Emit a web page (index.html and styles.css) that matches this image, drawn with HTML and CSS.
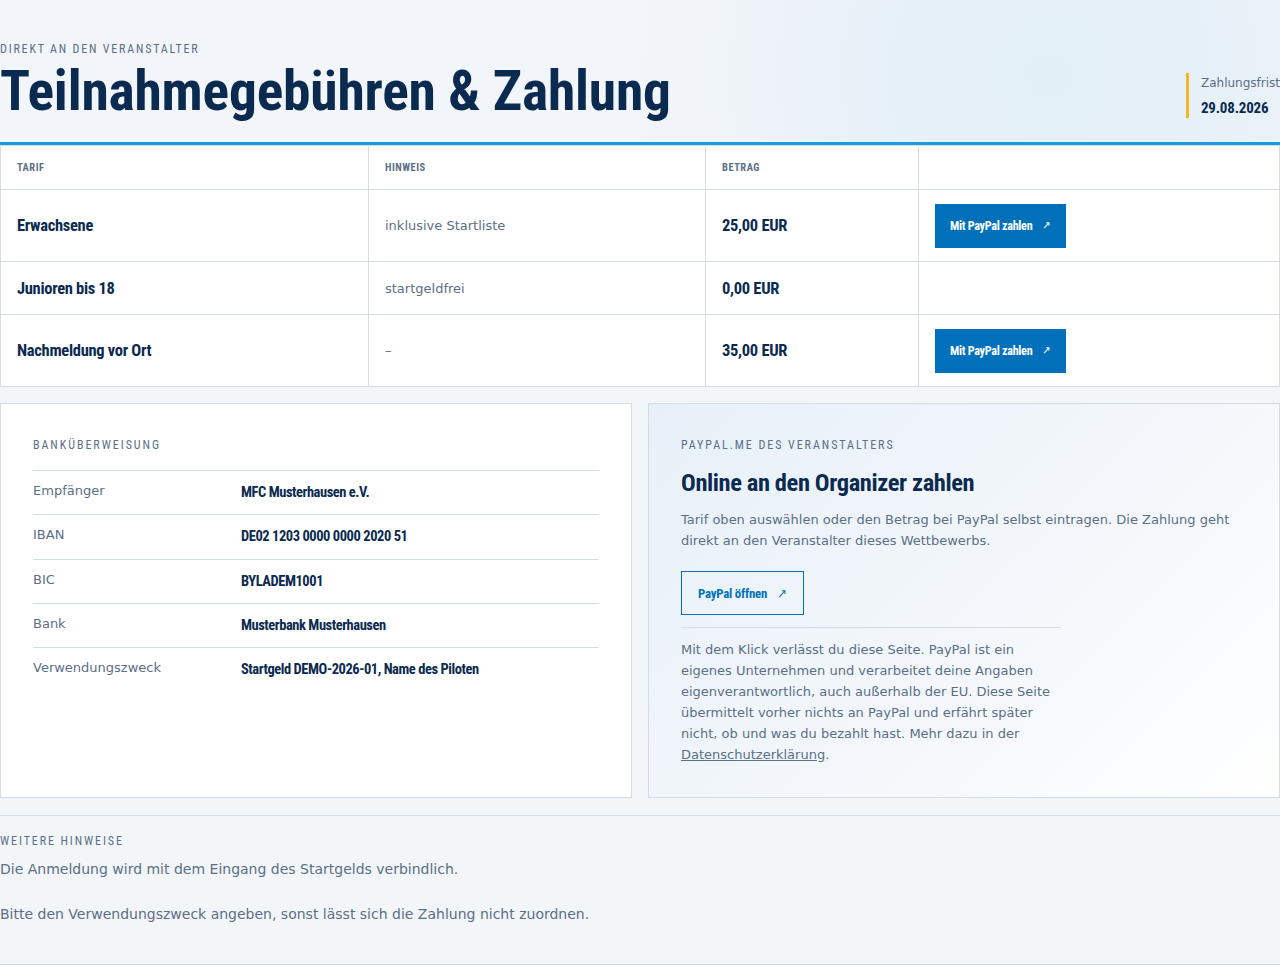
FILE: index.html
```html
<!DOCTYPE html>
<html lang="de">
<head>
<meta charset="utf-8">
<title>Teilnahmegebühren &amp; Zahlung</title>
<link rel="stylesheet" href="styles.css">
</head>
<body>
<main class="page">
  <header class="hero">
    <div class="hero-text">
      <p class="eyebrow">Direkt an den Veranstalter</p>
      <h1 class="title">Teilnahmegebühren &amp; Zahlung</h1>
    </div>
    <div class="deadline">
      <span class="deadline-label">Zahlungsfrist</span>
      <strong class="deadline-date">29.08.2026</strong>
    </div>
  </header>

  <table class="fees">
    <thead>
      <tr>
        <th class="col-tarif">Tarif</th>
        <th class="col-hint">Hinweis</th>
        <th class="col-amount">Betrag</th>
        <th class="col-action"></th>
      </tr>
    </thead>
    <tbody>
      <tr class="row-tall">
        <td class="tarif">Erwachsene</td>
        <td class="hint">inklusive Startliste</td>
        <td class="amount">25,00 EUR</td>
        <td><a class="btn-pay" href="#">Mit PayPal zahlen <span class="arrow">↗</span></a></td>
      </tr>
      <tr>
        <td class="tarif">Junioren bis 18</td>
        <td class="hint">startgeldfrei</td>
        <td class="amount">0,00 EUR</td>
        <td></td>
      </tr>
      <tr class="row-tall">
        <td class="tarif">Nachmeldung vor Ort</td>
        <td class="hint">–</td>
        <td class="amount">35,00 EUR</td>
        <td><a class="btn-pay" href="#">Mit PayPal zahlen <span class="arrow">↗</span></a></td>
      </tr>
    </tbody>
  </table>

  <section class="cards">
    <div class="card card-bank">
      <p class="eyebrow eyebrow-card">Banküberweisung</p>
      <dl class="bank-list">
        <div class="bank-row"><dt>Empfänger</dt><dd>MFC Musterhausen e.V.</dd></div>
        <div class="bank-row"><dt>IBAN</dt><dd>DE02 1203 0000 0000 2020 51</dd></div>
        <div class="bank-row"><dt>BIC</dt><dd>BYLADEM1001</dd></div>
        <div class="bank-row"><dt>Bank</dt><dd>Musterbank Musterhausen</dd></div>
        <div class="bank-row"><dt>Verwendungszweck</dt><dd>Startgeld DEMO-2026-01, Name des Piloten</dd></div>
      </dl>
    </div>
    <div class="card card-paypal">
      <p class="eyebrow eyebrow-card">PayPal.me des Veranstalters</p>
      <h2 class="card-title">Online an den Organizer zahlen</h2>
      <p class="card-text">Tarif oben auswählen oder den Betrag bei PayPal selbst eintragen. Die Zahlung geht direkt an den Veranstalter dieses Wettbewerbs.</p>
      <a class="btn-outline" href="#">PayPal öffnen <span class="arrow arrow-lg">↗</span></a>
      <p class="notice">Mit dem Klick verlässt du diese Seite. PayPal ist ein eigenes Unternehmen und verarbeitet deine Angaben eigenverantwortlich, auch außerhalb der EU. Diese Seite übermittelt vorher nichts an PayPal und erfährt später nicht, ob und was du bezahlt hast. Mehr dazu in der <a href="#" class="link">Datenschutzerklärung</a>.</p>
    </div>
  </section>

  <section class="more">
    <p class="eyebrow eyebrow-more">Weitere Hinweise</p>
    <p class="more-text">Die Anmeldung wird mit dem Eingang des Startgelds verbindlich.</p>
    <p class="more-text">Bitte den Verwendungszweck angeben, sonst lässt sich die Zahlung nicht zuordnen.</p>
  </section>
</main>
</body>
</html>
```
FILE: styles.css
```css
* { box-sizing: border-box; }

html, body {
  margin: 0;
  padding: 0;
}

body {
  background: #f3f6f9;
  font-family: "DejaVu Sans", sans-serif;
  color: #5b6f86;
  overflow-x: hidden;
}

.page {
  width: 1280px;
}

.hero {
  display: flex;
  justify-content: space-between;
  align-items: flex-end;
  height: 145px;
  padding: 42px 0 22px 0;
  border-bottom: 3px solid #1a9bdb;
  background:
    radial-gradient(circle at 1050px 75px, #e3eff7 0, #e6f0f8 140px, rgba(232,241,248,0.6) 260px, rgba(243,246,249,0) 420px),
    #f2f5f9;
}

.eyebrow {
  margin: 0;
  font-family: "Roboto Condensed", "Roboto", sans-serif;
  font-stretch: condensed;
  font-size: 12px;
  letter-spacing: 1.8px;
  text-transform: uppercase;
  color: #5b6f86;
  line-height: 16px;
}

.title {
  margin: 4px 0 -3px 0;
  font-family: "Roboto Condensed", "Roboto", sans-serif;
  font-stretch: condensed;
  font-weight: 700;
  font-size: 55.5px;
  line-height: 62px;
  color: #0b2a4f;
  letter-spacing: -0.2px;
}

.deadline {
  display: flex;
  flex-direction: column;
  gap: 8px;
  border-left: 3px solid #f2b824;
  padding: 2px 0 1px 12px;
  margin-bottom: 2px;
}

.deadline-label {
  font-size: 12px;
  line-height: 16px;
}

.deadline-date {
  font-family: "Roboto Condensed", "Roboto", sans-serif;
  font-stretch: condensed;
  font-weight: 700;
  font-size: 15px;
  line-height: 18px;
  letter-spacing: -0.2px;
  color: #0b2a4f;
}

/* table */
.fees {
  width: 1280px;
  border-collapse: collapse;
  background: #ffffff;
}

.fees th, .fees td {
  border: 1px solid #d3dde7;
  padding: 0 16px;
  text-align: left;
  vertical-align: middle;
}

.fees th {
  height: 44px;
  font-family: "Roboto Condensed", "Roboto", sans-serif;
  font-stretch: condensed;
  font-weight: 700;
  font-size: 10.5px;
  letter-spacing: 0.5px;
  text-transform: uppercase;
  color: #5b6f86;
}

.col-tarif { width: 368px; }
.col-hint { width: 337px; }
.col-amount { width: 213px; }

.fees td { height: 53px; }
.fees tr.row-tall td { height: 72px; }

.tarif, .amount {
  font-family: "Roboto Condensed", "Roboto", sans-serif;
  font-stretch: condensed;
  font-weight: 700;
  font-size: 16.5px;
  letter-spacing: -0.3px;
  color: #0b2a4f;
}

.hint {
  font-size: 13px;
  color: #5b6f86;
}

.btn-pay {
  display: inline-flex;
  align-items: center;
  gap: 10px;
  height: 44px;
  padding: 0 15px 0 15px;
  background: #0070ba;
  color: #ffffff;
  text-decoration: none;
  font-family: "Roboto Condensed", "Roboto", sans-serif;
  font-stretch: condensed;
  font-weight: 700;
  font-size: 12.2px;
  letter-spacing: -0.3px;
  vertical-align: middle;
}

.arrow {
  font-family: "DejaVu Sans", sans-serif;
  font-size: 11px;
  font-weight: 400;
  letter-spacing: 0;
}

.arrow-lg {
  font-size: 13px;
}

/* cards */
.cards {
  display: grid;
  grid-template-columns: 632px 632px;
  gap: 16px;
  margin-top: 16px;
}

.card {
  border: 1px solid #d3dde7;
  padding: 32px;
  min-height: 395px;
}

.card-bank {
  background: #ffffff;
}

.card-paypal {
  background: linear-gradient(135deg, #e7f0f8 0%, #f3f7fb 55%, #ffffff 100%);
}

.eyebrow-card {
  letter-spacing: 1.95px;
  line-height: 18px;
}

.bank-list {
  margin: 16px 0 0 0;
  border-top: 1px solid #d3dde7;
}

.bank-row {
  display: grid;
  grid-template-columns: 208px 1fr;
  align-items: start;
  padding: 11px 0 10.3px 0;
  border-bottom: 1px solid #d3dde7;
}

.bank-row:last-child {
  border-bottom: none;
}

.bank-row dt {
  font-size: 13px;
  color: #5b6f86;
  line-height: 18px;
}

.bank-row dd {
  margin: 0;
  font-family: "Roboto Condensed", "Roboto", sans-serif;
  font-stretch: condensed;
  font-weight: 700;
  font-size: 14.5px;
  letter-spacing: -0.45px;
  color: #0b2a4f;
  line-height: 22px;
}

.card-title {
  margin: 14px 0 0 0;
  font-family: "Roboto Condensed", "Roboto", sans-serif;
  font-stretch: condensed;
  font-weight: 700;
  font-size: 24.5px;
  letter-spacing: -0.4px;
  line-height: 30px;
  color: #0b2a4f;
}

.card-text {
  margin: 11px 0 0 0;
  font-size: 13px;
  line-height: 21px;
  color: #5b6f86;
}

.btn-outline {
  display: inline-flex;
  align-items: center;
  gap: 10px;
  height: 44px;
  margin-top: 20px;
  padding: 0 16px;
  border: 1px solid #0070ba;
  color: #0070ba;
  text-decoration: none;
  font-family: "Roboto Condensed", "Roboto", sans-serif;
  font-stretch: condensed;
  font-weight: 700;
  font-size: 12.8px;
  letter-spacing: -0.2px;
}

.notice {
  width: 380px;
  margin: 12px 0 0 0;
  padding-top: 11px;
  border-top: 1px solid #d3dde7;
  font-size: 13px;
  line-height: 21px;
  color: #5b6f86;
}

.link {
  color: #5b6f86;
  text-decoration: underline;
}

/* more */
.more {
  margin-top: 17px;
  border-top: 1px solid #d3dde7;
  border-bottom: 1px solid #d3dde7;
  padding: 17px 0 40px 0;
}

.eyebrow-more {
  letter-spacing: 1.9px;
}

.more-text {
  margin: 10px 0 0 0;
  font-size: 14px;
  line-height: 20px;
  color: #5b6f86;
}

.more-text + .more-text {
  margin-top: 25px;
}
```
